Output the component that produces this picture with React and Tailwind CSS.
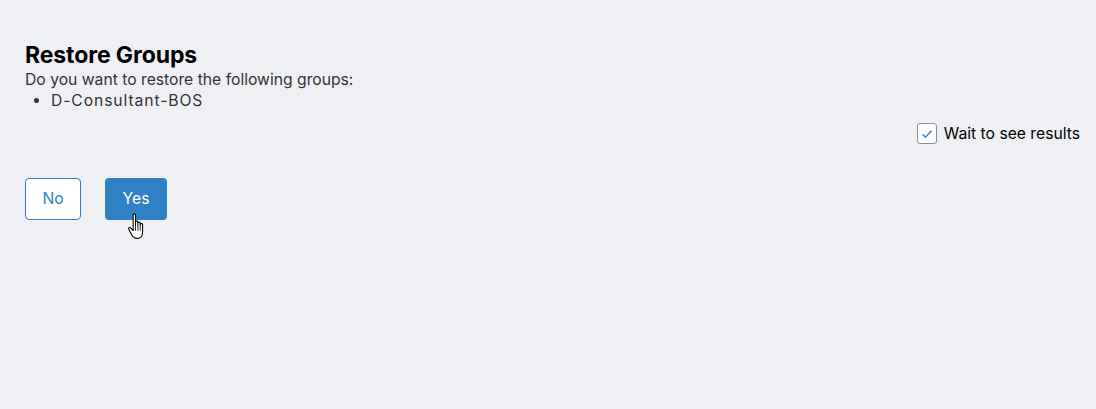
import React from "react";

const App = () => {
    return (
        <div className="w-[1096px] h-[409px] bg-[#eff0f4] font-['Inter','Liberation_Sans',sans-serif] text-[#222]">
            <div className="pt-[41px] px-[25px] pr-[16px]">
                {/* HEADER */}
                <h2 className="text-[23px] leading-[28px] font-bold text-black tracking-[-0.1px]">
                    Restore Groups
                </h2>
                <p className="text-[15.7px] leading-[21px] text-[#333]">
                    Do you want to restore the following groups:
                </p>
                <ul className="list-disc pl-[26px] text-[15.7px] leading-[22px] text-[#333] tracking-[0.9px]">
                    <li>D-Consultant-BOS</li>
                </ul>

                {/* OPTIONS */}
                <div className="flex justify-end mt-[10px]">
                    <label className="flex items-center gap-[7px] text-[15.7px] text-black">
                        <span className="w-[20px] h-[21px] rounded-[3px] border border-[#8a8f98] bg-white flex items-center justify-center">
                            <svg width="12" height="10" viewBox="0 0 12 10">
                                <path d="M1.5 5.5 L4.5 8.2 L10.5 1.8" fill="none" stroke="#3a86c8" strokeWidth="1.6" />
                            </svg>
                        </span>
                        Wait to see results
                    </label>
                </div>

                {/* ACTIONS */}
                <div className="flex gap-[24px] mt-[32px]">
                    <button className="relative w-[56px] h-[42px] rounded-[4px] border border-[#2f7fc1] bg-white text-[#2f7fc1] text-[15.7px]">
                        No
                    </button>
                    <button className="relative w-[62px] h-[42px] rounded-[4px] bg-[#2f80c4] text-white text-[15.7px]">
                        Yes
                        <svg className="absolute left-[22px] top-[35px]" width="17" height="26" viewBox="0 0 14 22">
                            <path
                                d="M5 1.5 C5 0.7 7 0.7 7 1.5 L7 10 L7 7.5 C7 6.7 9 6.7 9 7.5 L9 10 L9 8.5 C9 7.7 11 7.7 11 8.5 L11 10.5 L11 9.5 C11 8.7 13 8.7 13 9.5 L13 16 C13 19 11.5 21.5 8.5 21.5 C6 21.5 4.5 20 3.5 18 L1.2 13.5 C0.8 12.6 2 11.8 2.8 12.6 L5 15 Z"
                                fill="white"
                                stroke="black"
                                strokeWidth="0.9"
                                strokeLinejoin="round"
                            />
                            <path d="M7 10 L7 15 M9 10 L9 15 M11 10.5 L11 15" stroke="black" strokeWidth="0.7" />
                        </svg>
                    </button>
                </div>
            </div>
        </div>
    );
};

export default App;
